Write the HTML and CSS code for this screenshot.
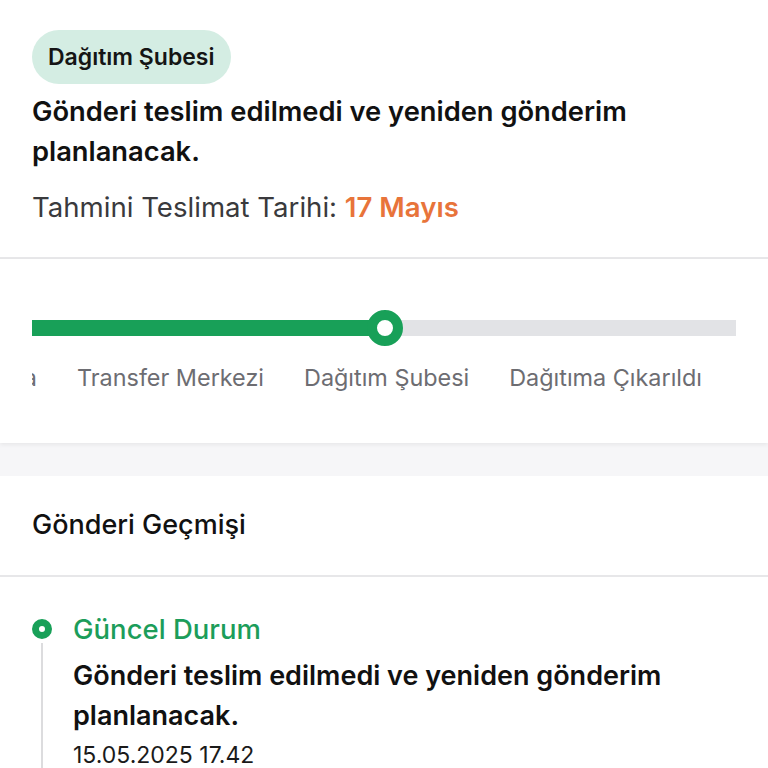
FILE: index.html
```html
<!DOCTYPE html>
<html lang="tr">
<head>
<meta charset="utf-8">
<title>Gönderi</title>
<link rel="stylesheet" href="styles.css">
</head>
<body>
<section class="summary">
  <span class="badge">Dağıtım Şubesi</span>
  <h1 class="title">Gönderi teslim edilmedi ve yeniden gönderim planlanacak.</h1>
  <p class="eta">Tahmini Teslimat Tarihi: <strong>17 Mayıs</strong></p>
</section>

<section class="progress">
  <div class="bar">
    <div class="bar-done"></div>
    <div class="bar-node"></div>
    <div class="bar-rest"></div>
  </div>
  <div class="steps">
    <div class="steps-strip">
      <span class="step step-cut">Yolda</span>
      <span class="step">Transfer Merkezi</span>
      <span class="step">Dağıtım Şubesi</span>
      <span class="step">Dağıtıma Çıkarıldı</span>
    </div>
  </div>
</section>

<div class="band"></div>

<section class="history-head">
  <h2>Gönderi Geçmişi</h2>
</section>

<section class="history">
  <div class="event">
    <div class="event-rail">
      <span class="event-dot"></span>
      <span class="event-line"></span>
    </div>
    <div class="event-body">
      <div class="event-status">Güncel Durum</div>
      <div class="event-text">Gönderi teslim edilmedi ve yeniden gönderim planlanacak.</div>
      <div class="event-date">15.05.2025 17.42</div>
    </div>
  </div>
</section>
</body>
</html>
```

FILE: styles.css
```css
* { box-sizing: border-box; }
html, body { margin: 0; padding: 0; background: #fff; }
body {
  font-family: Inter, "Noto Sans", "Liberation Sans", sans-serif;
  color: #111;
  width: 768px;
  overflow: hidden;
}

.summary {
  padding: 30px 32px 33px;
  border-bottom: 2px solid #e7e7e9;
  display: flex;
  flex-direction: column;
  align-items: flex-start;
}
.badge {
  display: inline-flex;
  align-items: center;
  height: 54px;
  padding: 0 16px;
  border-radius: 27px;
  background: #d4ede3;
  font-size: 23px;
  font-weight: 600;
  color: #151515;
}
.title {
  margin: 8px 0 0;
  font-size: 27.3px;
  line-height: 40px;
  font-weight: 600;
  color: #111;
  width: 680px;
}
.eta {
  margin: 18px 0 0;
  font-size: 27.6px;
  line-height: 34px;
  color: #3a3a3d;
}
.eta strong {
  color: #e8743a;
  font-weight: 600;
}

.progress {
  padding: 51px 32px 49px;
  position: relative;
  z-index: 1;
  box-shadow: 0 2px 4px rgba(0,0,0,0.06);
}
.bar {
  display: flex;
  align-items: center;
  height: 36px;
  width: 704px;
}
.bar-done {
  height: 16px;
  width: 339px;
  background: #18a058;
}
.bar-node {
  width: 36px;
  height: 36px;
  border-radius: 50%;
  border: 10px solid #18a058;
  background: #fff;
  margin-left: -4px;
  position: relative;
  z-index: 1;
}
.bar-rest {
  height: 16px;
  flex: 1;
  background: #e2e3e6;
  margin-left: -4px;
}
.steps {
  margin-top: 16px;
  width: 704px;
  overflow: hidden;
}
.steps-strip {
  display: flex;
  gap: 40px;
  margin-left: -57px;
  white-space: nowrap;
}
.step {
  font-size: 23.4px;
  line-height: 32px;
  color: #6d6d72;
  flex: none;
}
.step-cut { width: 62px; text-align: right; }

.band {
  height: 33px;
  background: #f6f6f8;
}

.history-head {
  border-bottom: 2px solid #e7e7e9;
  padding: 32px 32px 0;
  height: 101px;
}
.history-head h2 {
  margin: 0;
  font-size: 27px;
  line-height: 34px;
  font-weight: 500;
  color: #111;
}

.history {
  padding: 35px 32px 0 32px;
}
.event {
  display: flex;
  gap: 21px;
}
.event-rail {
  width: 20px;
  display: flex;
  flex-direction: column;
  align-items: center;
  padding-top: 7px;
}
.event-dot {
  width: 20px;
  height: 20px;
  border-radius: 50%;
  border: 7px solid #18a058;
  background: #fff;
  flex: none;
}
.event-line {
  width: 2px;
  flex: 1;
  margin-top: 4px;
  background: #dcdcde;
  min-height: 140px;
}
.event-status {
  font-size: 27.5px;
  line-height: 34px;
  font-weight: 500;
  color: #1c9d5a;
}
.event-text {
  margin-top: 10px;
  font-size: 27px;
  line-height: 40px;
  font-weight: 600;
  color: #111;
  width: 660px;
}
.event-date {
  font-size: 23px;
  line-height: 38px;
  color: #1a1a1a;
}
```
